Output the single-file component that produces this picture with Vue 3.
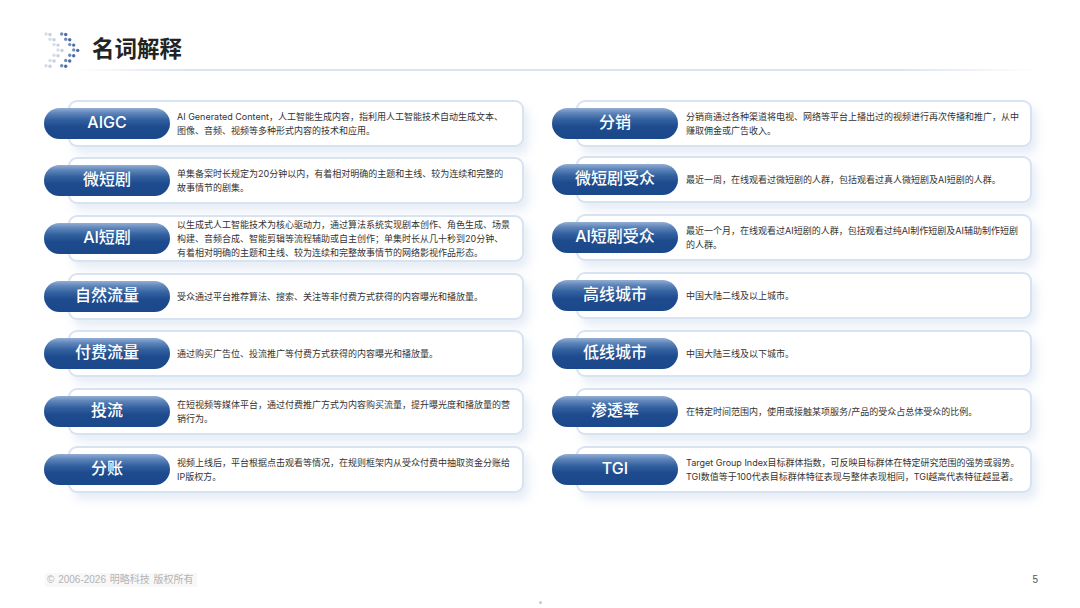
<script setup>
const left = [
  { t: 'AIGC', d: 'AI Generated Content，人工智能生成内容，指利用人工智能技术自动生成文本、图像、音频、视频等多种形式内容的技术和应用。', gap: 10 },
  { t: '微短剧', d: '单集备案时长规定为20分钟以内，有着相对明确的主题和主线、较为连续和完整的故事情节的剧集。', gap: 11 },
  { t: 'AI短剧', d: '以生成式人工智能技术为核心驱动力，通过算法系统实现剧本创作、角色生成、场景构建、音频合成、智能剪辑等流程辅助或自主创作；单集时长从几十秒到20分钟、有着相对明确的主题和主线、较为连续和完整故事情节的网络影视作品形态。', gap: 11, lh: 14 },
  { t: '自然流量', d: '受众通过平台推荐算法、搜索、关注等非付费方式获得的内容曝光和播放量。', gap: 10 },
  { t: '付费流量', d: '通过购买广告位、投流推广等付费方式获得的内容曝光和播放量。', gap: 11 },
  { t: '投流', d: '在短视频等媒体平台，通过付费推广方式为内容购买流量，提升曝光度和播放量的营销行为。', gap: 11 },
  { t: '分账', d: '视频上线后，平台根据点击观看等情况，在规则框架内从受众付费中抽取资金分账给IP版权方。', gap: 0 }
]
const right = [
  { t: '分销', d: '分销商通过各种渠道将电视、网络等平台上播出过的视频进行再次传播和推广，从中赚取佣金或广告收入。', gap: 9 },
  { t: '微短剧受众', d: '最近一周，在线观看过微短剧的人群，包括观看过真人微短剧及AI短剧的人群。', gap: 11 },
  { t: 'AI短剧受众', d: '最近一个月，在线观看过AI短剧的人群，包括观看过纯AI制作短剧及AI辅助制作短剧的人群。', gap: 11 },
  { t: '高线城市', d: '中国大陆二线及以上城市。', gap: 11 },
  { t: '低线城市', d: '中国大陆三线及以下城市。', gap: 11 },
  { t: '渗透率', d: '在特定时间范围内，使用或接触某项服务/产品的受众占总体受众的比例。', gap: 11 },
  { t: 'TGI', d: 'Target Group Index目标群体指数，可反映目标群体在特定研究范围的强势或弱势。TGI数值等于100代表目标群体特征表现与整体表现相同，TGI越高代表特征越显著。', gap: 0 }
]
const columns = [left, right]
const rows = [
  [2, 1], [6, 6.3], [10, 11.6], [14, 16.9], [10, 22.2], [6, 27.5], [2, 32.8]
]
const dots = []
rows.forEach(([x, y]) => {
  for (const off of [0, 15.7]) {
    dots.push({ cx: x + off, cy: y, o: off ? 0.75 : 0.22 })
    dots.push({ cx: x + off + 4, cy: y + 0.5, o: off ? 0.95 : 0.3 })
  }
})
</script>

<template>
  <div class="page">
    <header class="head">
      <svg class="logo" width="40" height="38" viewBox="0 0 40 38" aria-hidden="true">
        <circle v-for="(p, i) in dots" :key="i" :cx="p.cx" :cy="p.cy + 2" r="1.7" fill="#3f659f" :opacity="p.o" />
      </svg>
      <h1 class="title">名词解释</h1>
    </header>
    <div class="rule"></div>
    <main class="grid">
      <section v-for="(col, c) in columns" :key="c" class="col" :class="{ second: c === 1 }">
        <div v-for="item in col" :key="item.t" class="row" :style="{ marginBottom: item.gap + 'px' }">
          <div class="pill">{{ item.t }}</div>
          <div class="card"><p :style="item.lh ? { lineHeight: item.lh + 'px' } : null">{{ item.d }}</p></div>
        </div>
      </section>
    </main>
    <footer class="foot">
      <span class="copy">© 2006-2026 明略科技 版权所有</span>
      <span class="num">5</span>
    </footer>
    <div class="dot"></div>
  </div>
</template>

<style>
html, body { margin: 0; background: #fff; }
</style>

<style scoped>
.page {
  width: 1080px;
  height: 608px;
  overflow: hidden;
  background: #fff;
  font-family: Inter, "Noto Sans CJK SC", sans-serif;
  display: flex;
  flex-direction: column;
  box-sizing: border-box;
  position: relative;
}
.head {
  height: 68px;
  padding: 26px 0 0 44px;
  box-sizing: border-box;
  display: flex;
  align-items: center;
  gap: 8px;
}
.logo { flex: none; margin-top: 6px; }
.title {
  margin: 0;
  font: 700 22.5px/1 "Noto Sans CJK SC", sans-serif;
  color: #242424;
}
.rule {
  height: 2px;
  margin: 1px 40px 0 74px;
  background: linear-gradient(90deg, #fff 0, #dbe4f0 12%, #dbe4f0 85%, #fff 100%);
}
.grid {
  display: flex;
  gap: 28px;
  padding: 29px 0 0 44px;
}
.col {
  width: 480px;
  display: flex;
  flex-direction: column;
}
.row {
  height: 47px;
  display: flex;
  align-items: center;
}
.pill {
  flex: none;
  position: relative;
  z-index: 1;
  width: 126px;
  height: 30.5px;
  border-radius: 16px;
  background: linear-gradient(180deg, #93aed4 0, #5f86ba 16%, #32619f 38%, #1e4b8e 60%, #1b478b 100%);
  color: #fff;
  font: 500 16px/29px Inter, "Noto Sans CJK SC", sans-serif;
  text-align: center;
}
.card {
  flex: none;
  box-sizing: border-box;
  width: 456px;
  height: 100%;
  margin-left: -102px;
  padding: 0 10.5px 0 107px;
  background: #fff;
  border: 2px solid #d8e3f2;
  border-radius: 9px;
  box-shadow: 5px 7px 10px rgba(176, 196, 226, 0.3);
  display: flex;
  align-items: center;
}
.second .card { padding-left: 108px; padding-right: 8.5px; }
.card p {
  margin: 0;
  font-size: 9px;
  line-height: 13.3px;
  color: #333;
}
.foot {
  position: absolute;
  left: 45px;
  right: 42px;
  top: 573px;
  display: flex;
  justify-content: space-between;
  align-items: center;
  font: 10px/12px "Liberation Sans", "Noto Sans CJK SC", sans-serif;
  word-spacing: 1px;
}
.copy {
  color: #b4b4b4;
  background: #f8f8f8;
  padding: 1px 3px 1px 2px;
}
.num { color: #555; }
.dot {
  position: absolute;
  left: 539px;
  top: 601px;
  width: 3px;
  height: 3px;
  background: #c4c9ce;
  border-radius: 50%;
}
</style>
